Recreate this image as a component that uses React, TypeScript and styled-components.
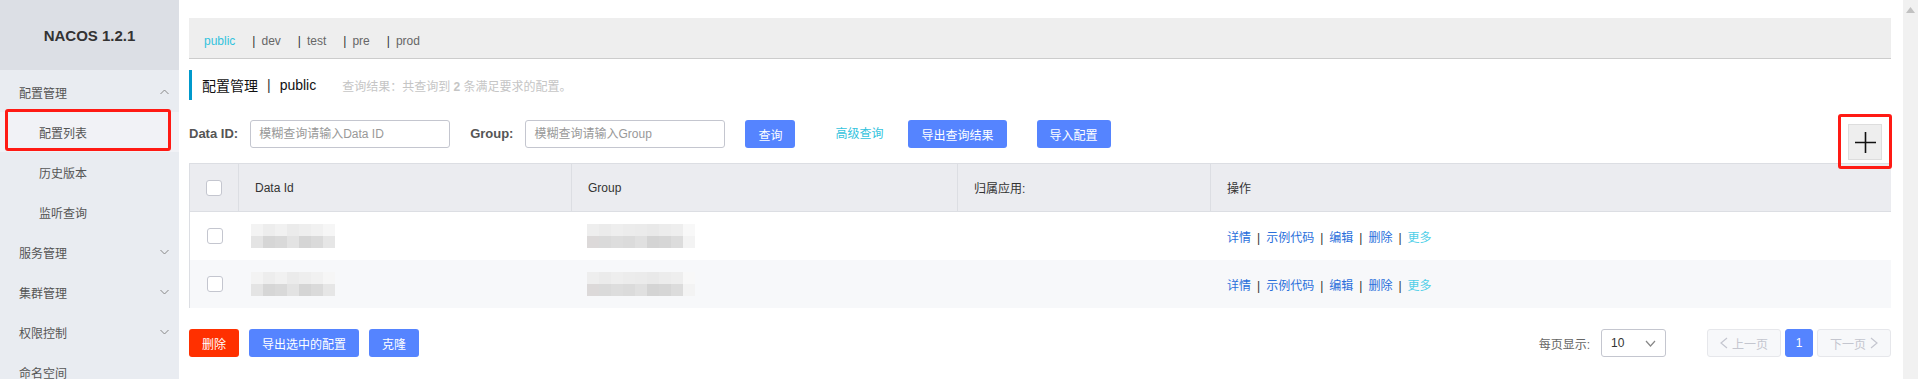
import styled, { createGlobalStyle } from "styled-components";

const GlobalStyle = createGlobalStyle`
  body {
    margin: 0;
    font-family: "Liberation Sans", "Noto Sans CJK SC", sans-serif;
    font-size: 12px;
    color: #333;
    background: #fff;
  }
`;

const Page = styled.div`
  display: flex;
  width: 1918px;
  height: 379px;
  overflow: hidden;
`;

const Sidebar = styled.aside`
  width: 179px;
  flex-shrink: 0;
  background: #e9ecf1;
`;

const Brand = styled.div`
  height: 70px;
  background: #dcdfe5;
  display: flex;
  align-items: center;
  justify-content: center;
  font-size: 15px;
  font-weight: bold;
  color: #333;
`;

const Menu = styled.ul`
  list-style: none;
  margin: 0;
  padding: 2px 0 0;
`;

const MenuItem = styled.li<{ $sub?: boolean; $active?: boolean }>`
  position: relative;
  height: 40px;
  display: flex;
  align-items: center;
  justify-content: space-between;
  padding: 0 10px 0 ${(p) => (p.$sub ? "39px" : "19px")};
  color: #555;
  background: ${(p) => (p.$active ? "#f1f2f6" : "transparent")};
`;

const Mark = styled.span<{ $inset: string }>`
  position: absolute;
  inset: ${(p) => p.$inset};
  border: 3px solid #ff1a14;
  border-radius: 3px;
  pointer-events: none;
`;

const Main = styled.main`
  flex: 1;
  min-width: 0;
  padding: 18px 12px 0 10px;
`;

const NsBar = styled.div`
  height: 41px;
  box-sizing: border-box;
  background: #eee;
  border-bottom: 1px solid #ccc;
  display: flex;
  align-items: center;
  padding: 6px 0 0 15px;
`;

const NsTab = styled.span<{ $active?: boolean }>`
  color: ${(p) => (p.$active ? "#33c3dd" : "#666")};
  margin-right: 17px;
`;

const NsSep = styled.span`
  color: #333;
  margin-right: 6px;
`;

const TitleRow = styled.div`
  margin-top: 11px;
  height: 30px;
  border-left: 3px solid #09c;
  display: flex;
  align-items: center;
  padding-left: 10px;
`;

const Title = styled.span`
  font-size: 14px;
  color: #111;
`;

const TitleSep = styled.span`
  font-size: 14px;
  color: #333;
  margin: 0 9px;
`;

const Hint = styled.span`
  margin-left: 26px;
  color: #c5c5c5;
  b {
    font-weight: bold;
  }
`;

const SearchRow = styled.div`
  margin-top: 20px;
  display: flex;
  align-items: flex-start;
`;

const Label = styled.label`
  height: 28px;
  line-height: 28px;
  font-size: 13px;
  font-weight: bold;
  color: #555;
  margin-right: 12px;
`;

const Input = styled.input`
  width: 200px;
  height: 28px;
  flex-shrink: 0;
  box-sizing: border-box;
  border: 1px solid #c4c6cf;
  border-radius: 3px;
  padding: 0 8px;
  font: inherit;
  font-size: 12px;
  margin-right: 20px;
  outline: none;
  &::placeholder {
    color: #999;
  }
`;

const Button = styled.button<{ $danger?: boolean; $gap?: number }>`
  height: 28px;
  padding: 0 12px;
  border: 1px solid transparent;
  border-radius: 3px;
  background: ${(p) => (p.$danger ? "#ff3000" : "#5584ff")};
  color: #fff;
  font: inherit;
  font-size: 12px;
  margin-right: ${(p) => p.$gap ?? 10}px;
  cursor: pointer;
`;

const TextLink = styled.span`
  height: 28px;
  line-height: 28px;
  color: #33c3dd;
  margin: 0 25px 0 40px;
`;

const AddWrap = styled.div`
  position: relative;
  margin-left: auto;
  margin-top: 4px;
  margin-right: 9px;
`;

const AddButton = styled.div`
  width: 34px;
  height: 36px;
  box-sizing: border-box;
  background: #eee;
  border: 1px solid #ddd;
  display: flex;
  align-items: center;
  justify-content: center;
`;

const Table = styled.div`
  margin-top: 3px;
  border-left: 1px solid #dcdee3;
`;

const Row = styled.div<{ $head?: boolean; $stripe?: boolean }>`
  display: grid;
  grid-template-columns: 49px 333px 386px 253px 1fr;
  height: ${(p) => (p.$head ? "47px" : "48px")};
  background: ${(p) => (p.$head ? "#ebecf0" : p.$stripe ? "#f7f8fa" : "#fff")};
  border-top: ${(p) => (p.$head ? "1px solid #dcdee3" : "none")};
  border-bottom: ${(p) => (p.$head ? "1px solid #dcdee3" : "none")};
`;

const Cell = styled.div<{ $head?: boolean; $pad?: number; $center?: boolean }>`
  display: flex;
  align-items: center;
  justify-content: ${(p) => (p.$center ? "center" : "flex-start")};
  padding-left: ${(p) => p.$pad ?? 16}px;
  color: #333;
  border-right: ${(p) => (p.$head ? "1px solid #dcdee3" : "none")};
  &:last-child {
    border-right: none;
  }
`;

const Check = styled.span`
  width: 16px;
  height: 16px;
  box-sizing: border-box;
  border: 1px solid #c4c6cf;
  border-radius: 3px;
  background: #fff;
`;

const Mosaic = styled.div<{ $cols: number }>`
  display: grid;
  grid-template-columns: repeat(${(p) => p.$cols}, 12px);
  grid-auto-rows: 12px;
`;

const Pixel = styled.span<{ $c: string }>`
  background: ${(p) => p.$c};
`;

const Actions = styled.div`
  display: flex;
  align-items: center;
`;

const ActLink = styled.span<{ $more?: boolean }>`
  color: ${(p) => (p.$more ? "#4fcfe8" : "#2a6fdb")};
`;

const ActSep = styled.span`
  color: #333;
  margin: 0 6px;
`;

const Footer = styled.div`
  margin-top: 21px;
  display: flex;
  align-items: center;
`;

const PageSize = styled.span`
  margin-left: auto;
  color: #666;
  margin-right: 11px;
`;

const Select = styled.div`
  width: 65px;
  height: 28px;
  box-sizing: border-box;
  border: 1px solid #c4c6cf;
  border-radius: 3px;
  display: flex;
  align-items: center;
  justify-content: space-between;
  padding: 0 9px;
  color: #333;
  margin-right: 37px;
`;

const PageBtn = styled.div<{ $current?: boolean }>`
  height: 28px;
  min-width: 28px;
  box-sizing: border-box;
  padding: 0 ${(p) => (p.$current ? "0" : "12px")};
  border: 1px solid ${(p) => (p.$current ? "#5584ff" : "#e6e7eb")};
  background: ${(p) => (p.$current ? "#5584ff" : "#f7f8fa")};
  color: ${(p) => (p.$current ? "#fff" : "#c4c6cf")};
  border-radius: 3px;
  display: flex;
  align-items: center;
  justify-content: center;
  gap: 4px;
  margin-left: 4px;
`;

const Scrollbar = styled.div`
  width: 15px;
  flex-shrink: 0;
  background: #f1f1f1;
  display: flex;
  justify-content: center;
  padding-top: 7px;
  box-sizing: border-box;
`;

const Chevron = ({ up }: { up?: boolean }) => (
  <svg width="9" height="6" viewBox="0 0 9 6" fill="none">
    <path
      d={up ? "M0.5 5L4.5 1L8.5 5" : "M0.5 1L4.5 5L8.5 1"}
      stroke="#888"
      strokeWidth="1"
    />
  </svg>
);

const Arrow = ({
  dir,
  color = "#c4c6cf",
  w = 8,
  h = 12,
}: {
  dir: "l" | "r" | "d";
  color?: string;
  w?: number;
  h?: number;
}) => {
  const d =
    dir === "l"
      ? `M${w - 1} 1L1 ${h / 2}L${w - 1} ${h - 1}`
      : dir === "r"
      ? `M1 1L${w - 1} ${h / 2}L1 ${h - 1}`
      : `M1 1L${w / 2} ${h - 1}L${w - 1} 1`;
  return (
    <svg width={w} height={h} viewBox={`0 0 ${w} ${h}`} fill="none">
      <path d={d} stroke={color} strokeWidth="1.2" />
    </svg>
  );
};

// pixelated (blurred-out) cell content
const grays = {
  idTop: ["#f3f3f3", "#ededed", "#f1f1f1", "#ebebeb", "#eeeeee", "#f1f1f1", "#f6f6f6"],
  idBot: ["#e4e4e4", "#d6d6d6", "#d9d9d9", "#e3e3e3", "#d5d5d5", "#dadada", "#e6e6e6"],
  grTop: ["#eeeeee", "#ebebeb", "#eeeeee", "#ececec", "#ebebeb", "#e9e9e9", "#ececec", "#eeeeee", "#f8f8f8"],
  grBot: ["#dcd9d9", "#dadada", "#dddddd", "#dbdbdb", "#e0e0e0", "#d4d4d4", "#d6d6d6", "#dcdcdc", "#f3f3f3"],
};

const Blur = ({ top, bottom }: { top: string[]; bottom: string[] }) => (
  <Mosaic $cols={top.length}>
    {[...top, ...bottom].map((c, i) => (
      <Pixel key={i} $c={c} />
    ))}
  </Mosaic>
);

const namespaces = ["public", "dev", "test", "pre", "prod"];
const actions = ["详情", "示例代码", "编辑", "删除"];

const rows = [
  { id: "r1", stripe: false },
  { id: "r2", stripe: true },
];

export default function App() {
  return (
    <>
      <GlobalStyle />
      <Page>
        <Sidebar>
          <Brand>NACOS 1.2.1</Brand>
          <Menu>
            <MenuItem>
              配置管理
              <Chevron up />
            </MenuItem>
            <MenuItem $sub $active>
              配置列表
              <Mark $inset="-3px 8px 1px 5px" />
            </MenuItem>
            <MenuItem $sub>历史版本</MenuItem>
            <MenuItem $sub>监听查询</MenuItem>
            <MenuItem>
              服务管理
              <Chevron />
            </MenuItem>
            <MenuItem>
              集群管理
              <Chevron />
            </MenuItem>
            <MenuItem>
              权限控制
              <Chevron />
            </MenuItem>
            <MenuItem>命名空间</MenuItem>
          </Menu>
        </Sidebar>

        <Main>
          <NsBar>
            {namespaces.map((ns, i) => (
              <span key={ns}>
                {i > 0 && <NsSep>|</NsSep>}
                <NsTab $active={i === 0}>{ns}</NsTab>
              </span>
            ))}
          </NsBar>

          <TitleRow>
            <Title>配置管理</Title>
            <TitleSep>|</TitleSep>
            <Title>public</Title>
            <Hint>
              查询结果：共查询到 <b>2</b> 条满足要求的配置。
            </Hint>
          </TitleRow>

          <SearchRow>
            <Label>Data ID:</Label>
            <Input placeholder="模糊查询请输入Data ID" />
            <Label>Group:</Label>
            <Input placeholder="模糊查询请输入Group" />
            <Button $gap={0}>查询</Button>
            <TextLink>高级查询</TextLink>
            <Button $gap={30}>导出查询结果</Button>
            <Button>导入配置</Button>
            <AddWrap>
              <AddButton>
                <svg width="21" height="21" viewBox="0 0 21 21">
                  <path d="M10.5 0V21M0 10.5H21" stroke="#111" strokeWidth="1.6" />
                </svg>
              </AddButton>
              <Mark $inset="-10px -10px -9px -10px" />
            </AddWrap>
          </SearchRow>

          <Table>
            <Row $head>
              <Cell $head $center $pad={0}>
                <Check />
              </Cell>
              <Cell $head>Data Id</Cell>
              <Cell $head>Group</Cell>
              <Cell $head>归属应用:</Cell>
              <Cell $head>操作</Cell>
            </Row>
            {rows.map((r) => (
              <Row key={r.id} $stripe={r.stripe}>
                <Cell $center $pad={0}>
                  <Check />
                </Cell>
                <Cell $pad={12}>
                  <Blur top={grays.idTop} bottom={grays.idBot} />
                </Cell>
                <Cell $pad={15}>
                  <Blur top={grays.grTop} bottom={grays.grBot} />
                </Cell>
                <Cell />
                <Cell>
                  <Actions>
                    {actions.map((a) => (
                      <span key={a}>
                        <ActLink>{a}</ActLink>
                        <ActSep>|</ActSep>
                      </span>
                    ))}
                    <ActLink $more>更多</ActLink>
                  </Actions>
                </Cell>
              </Row>
            ))}
          </Table>

          <Footer>
            <Button $danger>删除</Button>
            <Button>导出选中的配置</Button>
            <Button>克隆</Button>
            <PageSize>每页显示:</PageSize>
            <Select>
              <span>10</span>
              <Arrow dir="d" w={11} h={7} color="#888" />
            </Select>
            <PageBtn>
              <Arrow dir="l" />
              上一页
            </PageBtn>
            <PageBtn $current>1</PageBtn>
            <PageBtn>
              下一页
              <Arrow dir="r" />
            </PageBtn>
          </Footer>
        </Main>

        <Scrollbar>
          <svg width="9" height="6" viewBox="0 0 9 6">
            <path d="M0 6L4.5 0L9 6Z" fill="#c1c1c1" />
          </svg>
        </Scrollbar>
      </Page>
    </>
  );
}
